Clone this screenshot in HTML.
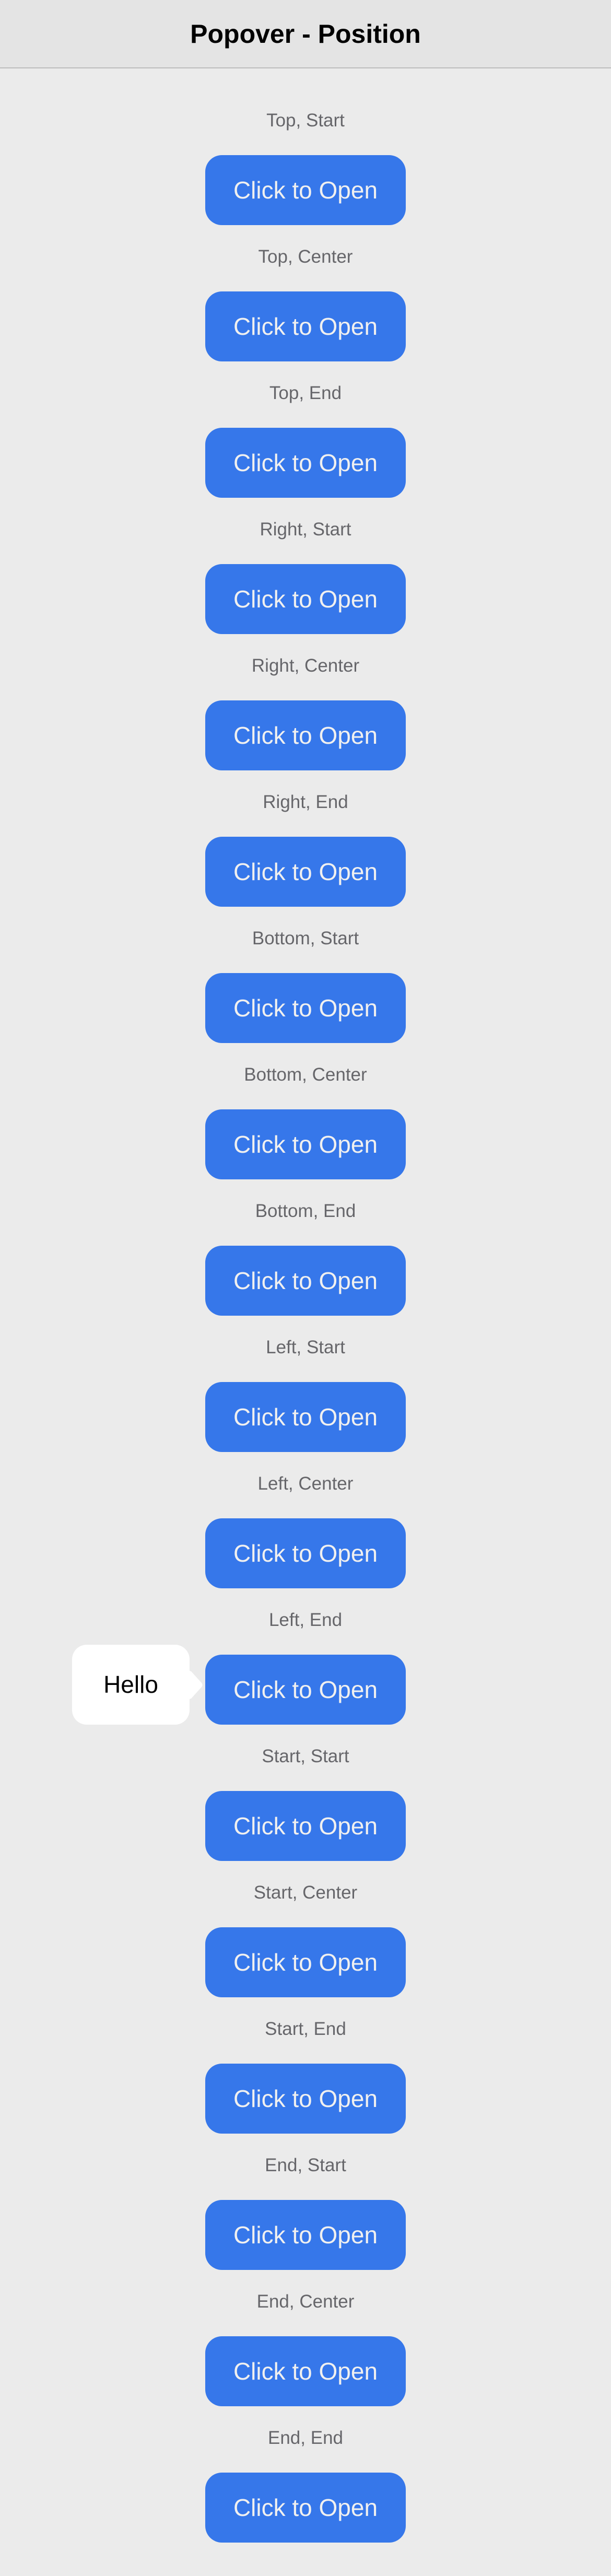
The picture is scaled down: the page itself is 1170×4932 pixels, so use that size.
<!DOCTYPE html>
<html><head><meta charset="utf-8"><style>
*{margin:0;padding:0;box-sizing:border-box}
html,body{width:1170px;height:4932px;background:#ebebeb;font-family:"Liberation Sans",sans-serif;overflow:hidden;position:relative}
.hdr{position:absolute;left:0;top:0;width:1170px;height:131px;background:#e4e4e4;border-bottom:2px solid #bdbdbd;text-align:center;line-height:131px;font-size:50px;font-weight:bold;color:#000}
.lbl{position:absolute;left:0;width:1170px;text-align:center;font-size:35px;color:#66666a;height:50px;line-height:50px}
.btn{position:absolute;left:393px;width:384px;height:134px;background:#3677ea;border-radius:32px;color:#f0f0f0;font-size:46px;text-align:center;line-height:134px}
.pop{position:absolute;left:138px;top:3149px;width:225px;height:153px;background:#fff;border-radius:28px;font-size:46px;color:#000;text-align:center;line-height:153px}
</style></head><body>
<div class="hdr">Popover - Position</div>
<div class="lbl" style="top:206px">Top, Start</div><div class="btn" style="top:297px">Click to Open</div>
<div class="lbl" style="top:467px">Top, Center</div><div class="btn" style="top:558px">Click to Open</div>
<div class="lbl" style="top:728px">Top, End</div><div class="btn" style="top:819px">Click to Open</div>
<div class="lbl" style="top:989px">Right, Start</div><div class="btn" style="top:1080px">Click to Open</div>
<div class="lbl" style="top:1250px">Right, Center</div><div class="btn" style="top:1341px">Click to Open</div>
<div class="lbl" style="top:1511px">Right, End</div><div class="btn" style="top:1602px">Click to Open</div>
<div class="lbl" style="top:1772px">Bottom, Start</div><div class="btn" style="top:1863px">Click to Open</div>
<div class="lbl" style="top:2033px">Bottom, Center</div><div class="btn" style="top:2124px">Click to Open</div>
<div class="lbl" style="top:2294px">Bottom, End</div><div class="btn" style="top:2385px">Click to Open</div>
<div class="lbl" style="top:2555px">Left, Start</div><div class="btn" style="top:2646px">Click to Open</div>
<div class="lbl" style="top:2816px">Left, Center</div><div class="btn" style="top:2907px">Click to Open</div>
<div class="lbl" style="top:3077px">Left, End</div><div class="btn" style="top:3168px">Click to Open</div>
<div class="lbl" style="top:3338px">Start, Start</div><div class="btn" style="top:3429px">Click to Open</div>
<div class="lbl" style="top:3599px">Start, Center</div><div class="btn" style="top:3690px">Click to Open</div>
<div class="lbl" style="top:3860px">Start, End</div><div class="btn" style="top:3951px">Click to Open</div>
<div class="lbl" style="top:4121px">End, Start</div><div class="btn" style="top:4212px">Click to Open</div>
<div class="lbl" style="top:4382px">End, Center</div><div class="btn" style="top:4473px">Click to Open</div>
<div class="lbl" style="top:4643px">End, End</div><div class="btn" style="top:4734px">Click to Open</div>
<div class="pop">Hello</div>
<svg style="position:absolute;left:360px;top:3198px" width="32" height="58"><path d="M0 0 L6 2 L26 24 Q29 28 26 32 L6 54 L0 56 Z" fill="#fff"/></svg>
</body></html>
